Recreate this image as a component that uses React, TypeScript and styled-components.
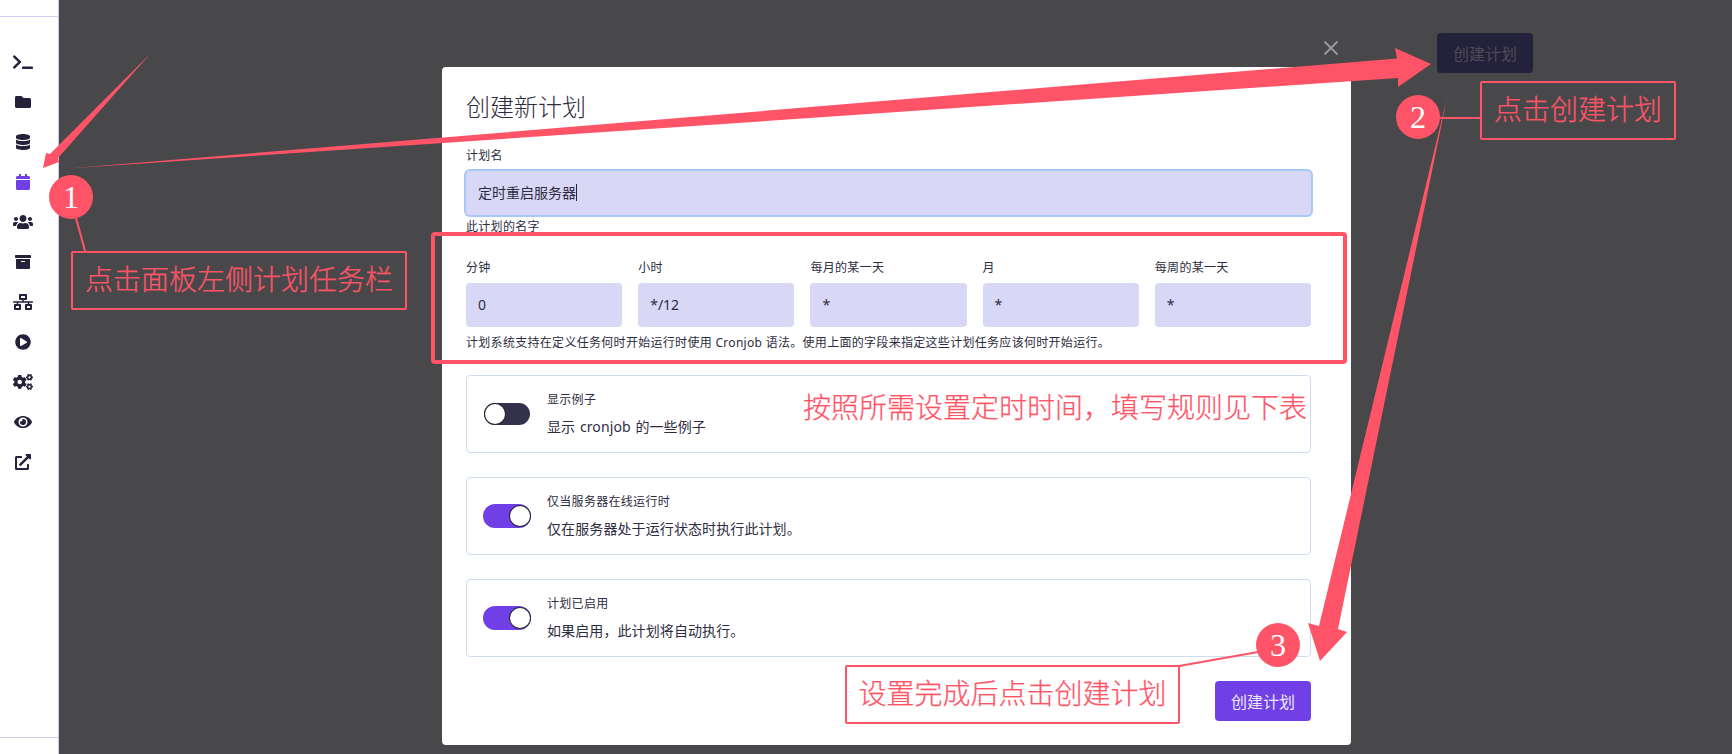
import React from "react";
import styled, { createGlobalStyle } from "styled-components";
import {
  FaTerminal, FaFolder, FaDatabase, FaCalendar, FaUsers, FaArchive,
  FaNetworkWired, FaPlayCircle, FaCogs, FaEye, FaExternalLinkAlt,
} from "react-icons/fa";

const RED = "#ff5468";
const PURPLE = "#7040e6";
const INK = "#24223a";
const SOFT = "#2e2c40";
const FONT = `"Noto Sans", "Noto Sans CJK SC", sans-serif`;

const Global = createGlobalStyle`
  html, body { margin: 0; padding: 0; width: 1732px; height: 754px; overflow: hidden; background: #48484a; }
  * { box-sizing: border-box; }
  body { font-family: ${FONT}; color: ${SOFT}; }
`;

const Page = styled.div`
  position: relative;
  display: flex;
  width: 1732px;
  height: 754px;
  overflow: hidden;
`;

const Sidebar = styled.aside`
  width: 59px;
  flex: none;
  height: 100%;
  padding: 16px 0;
  background: #fff;
  border-right: 1px solid #c9c8f0;
  display: flex;
  flex-direction: column;
`;

const Rule = styled.div`
  height: 1px;
  flex: none;
  background: #cfcef2;
`;

const NavList = styled.nav`
  flex: 1;
  padding-top: 25px;
  display: flex;
  flex-direction: column;
`;

const NavItem = styled.div<{ $active?: boolean }>`
  width: 46px;
  height: 40px;
  display: flex;
  align-items: center;
  justify-content: center;
  color: ${(p) => (p.$active ? PURPLE : INK)};
  svg {
    flex: none;
    width: 20px;
    height: 16px;
  }
`;

const Main = styled.main`
  flex: 1;
  display: flex;
  align-items: flex-start;
  padding-left: 383px;
  background: #48484a;
`;

const ModalWrap = styled.div`
  position: relative;
  width: 909px;
  margin-top: 67px;
  flex: none;
`;

const CloseBtn = styled.div`
  position: absolute;
  top: -28px;
  right: 12px;
  width: 16px;
  height: 16px;
  color: #9b9b9d;
`;

const Modal = styled.section`
  background: #fff;
  border-radius: 4px;
  padding: 24px 40px 24px 24px;
`;

const Title = styled.h2`
  margin: 0 0 24px;
  font-size: 24px;
  line-height: 32px;
  font-weight: 300;
`;

const Label = styled.div`
  font-size: 12px;
  line-height: 16px;
  letter-spacing: 0.3px;
  padding-top: 1px;
  margin-bottom: 7px;
`;

const Field = styled.div<{ $focus?: boolean }>`
  height: 44px;
  background: #d9d7f6;
  border-radius: 4px;
  padding: 0 12px 2px;
  display: flex;
  align-items: center;
  font-size: 14px;
  box-shadow: ${(p) => (p.$focus ? "0 0 0 2px #a8c8f5" : "none")};
`;

const Caret = styled.span`
  width: 1px;
  height: 17px;
  background: ${INK};
`;

const Hint = styled.div`
  font-size: 12px;
  line-height: 16px;
  letter-spacing: 0.3px;
  margin-top: 4px;
`;

const CronGrid = styled.div`
  display: grid;
  grid-template-columns: repeat(5, 1fr);
  gap: 16px;
  margin-top: 24px;
`;

const Footnote = styled.p`
  margin: 8px 0 24px;
  font-size: 12px;
  line-height: 16px;
  letter-spacing: 0.3px;
`;

const Card = styled.div`
  height: 78px;
  margin-bottom: 24px;
  border: 1px solid #cfdcec;
  border-radius: 4px;
  padding: 0 16px;
  display: flex;
  align-items: center;
  gap: 16px;
`;

const ToggleSlot = styled.div`
  width: 48px;
  flex: none;
  display: flex;
  justify-content: center;
`;

const Toggle = styled.div<{ $on?: boolean }>`
  position: relative;
  width: ${(p) => (p.$on ? 48 : 46)}px;
  height: ${(p) => (p.$on ? 24 : 22)}px;
  border-radius: 12px;
  background: ${(p) => (p.$on ? PURPLE : "#34324a")};
`;

const Knob = styled.span<{ $on?: boolean }>`
  position: absolute;
  top: ${(p) => (p.$on ? 2 : 1)}px;
  ${(p) => (p.$on ? "right: 1px;" : "left: 1px;")}
  width: 20px;
  height: 20px;
  border-radius: 50%;
  background: #fff;
  box-shadow: 0 0 0 1px #2a2838;
`;

const CardText = styled.div`
  display: flex;
  flex-direction: column;
  gap: 9px;
`;

const CardLabel = styled.div`
  font-size: 12px;
  line-height: 16px;
  letter-spacing: 0.3px;
`;

const CardDesc = styled.div`
  font-size: 14px;
  line-height: 20px;
  letter-spacing: 0.1px;
  word-spacing: 1px;
`;

const Footer = styled.div`
  display: flex;
  justify-content: flex-end;
`;

const Button = styled.div<{ $dim?: boolean }>`
  width: 96px;
  height: 40px;
  flex: none;
  border-radius: 4px;
  display: flex;
  align-items: center;
  justify-content: center;
  font-size: 16px;
  background: ${(p) => (p.$dim ? INK : PURPLE)};
  color: ${(p) => (p.$dim ? "#4c4a58" : "#ebe6fb")};
`;

const PageButton = styled(Button)`
  margin: 33px 0 0 86px;
`;

const Overlay = styled.svg`
  position: absolute;
  inset: 0;
  pointer-events: none;
`;

const Note = styled.div<{ $x: number; $y: number; $w: number }>`
  position: absolute;
  left: ${(p) => p.$x}px;
  top: ${(p) => p.$y}px;
  width: ${(p) => p.$w}px;
  height: 59px;
  padding-bottom: 5px;
  border: 2px solid ${RED};
  border-radius: 2px;
  display: flex;
  align-items: center;
  justify-content: center;
  color: ${RED};
  font-size: 28px;
  font-weight: 300;
  -webkit-text-stroke: 0.25px ${RED};
  white-space: nowrap;
`;

const FreeNote = styled.div`
  position: absolute;
  left: 803px;
  top: 387px;
  height: 40px;
  line-height: 40px;
  color: ${RED};
  font-size: 28px;
  font-weight: 300;
  -webkit-text-stroke: 0.25px ${RED};
  white-space: nowrap;
`;

const Badge = styled.div<{ $x: number; $y: number }>`
  position: absolute;
  left: ${(p) => p.$x - 22}px;
  top: ${(p) => p.$y - 22}px;
  width: 44px;
  height: 44px;
  border-radius: 50%;
  background: ${RED};
  color: #fff;
  display: flex;
  align-items: center;
  justify-content: center;
  font: 32px "Liberation Serif", serif;
`;

const navIcons = [
  FaTerminal, FaFolder, FaDatabase, FaCalendar, FaUsers, FaArchive,
  FaNetworkWired, FaPlayCircle, FaCogs, FaEye, FaExternalLinkAlt,
];

const cron = [
  ["分钟", "0"], ["小时", "*/12"], ["每月的某一天", "*"], ["月", "*"], ["每周的某一天", "*"],
];

const toggles = [
  { on: false, label: "显示例子", desc: "显示 cronjob 的一些例子" },
  { on: true, label: "仅当服务器在线运行时", desc: "仅在服务器处于运行状态时执行此计划。" },
  { on: true, label: "计划已启用", desc: "如果启用，此计划将自动执行。" },
];

export default function App() {
  return (
    <Page>
      <Global />
      <Sidebar>
        <Rule />
        <NavList>
          {navIcons.map((Icon, i) => (
            <NavItem key={i} $active={i === 3}><Icon /></NavItem>
          ))}
        </NavList>
        <Rule />
      </Sidebar>
      <Main>
        <ModalWrap>
          <CloseBtn>
            <svg width="16" height="16" viewBox="0 0 16 16" fill="none" stroke="currentColor" strokeWidth="1.8">
              <path d="M1.5 1.5 14.5 14.5M14.5 1.5 1.5 14.5" />
            </svg>
          </CloseBtn>
          <Modal>
            <Title>创建新计划</Title>
            <Label>计划名</Label>
            <Field $focus>定时重启服务器<Caret /></Field>
            <Hint>此计划的名字</Hint>
            <CronGrid>
              {cron.map(([label, value]) => (
                <div key={label}>
                  <Label>{label}</Label>
                  <Field>{value}</Field>
                </div>
              ))}
            </CronGrid>
            <Footnote>计划系统支持在定义任务何时开始运行时使用 Cronjob 语法。使用上面的字段来指定这些计划任务应该何时开始运行。</Footnote>
            {toggles.map((t) => (
              <Card key={t.label}>
                <ToggleSlot>
                  <Toggle $on={t.on}><Knob $on={t.on} /></Toggle>
                </ToggleSlot>
                <CardText>
                  <CardLabel>{t.label}</CardLabel>
                  <CardDesc>{t.desc}</CardDesc>
                </CardText>
              </Card>
            ))}
            <Footer><Button>创建计划</Button></Footer>
          </Modal>
        </ModalWrap>
        <PageButton $dim>创建计划</PageButton>
      </Main>

      <Overlay width="1732" height="754" viewBox="0 0 1732 754">
        <g fill={RED}>
          <polygon points="151,53 50,154 46,153 43,168 59,162 58,158" />
          <polygon points="68,168.5 1397,58.5 1395,48 1431,64 1398,87 1398,78" />
          <polygon points="1447,98 1338,629 1347,632 1320,661 1308,623 1319,626" />
        </g>
        <g stroke={RED} strokeWidth="2" fill="none">
          <path d="M76 218 85 251" />
          <path d="M1438 118H1480" />
          <path d="M1179 666 1258 652" />
          <rect x="433" y="234" width="912" height="128" rx="2" strokeWidth="4" />
        </g>
      </Overlay>

      <Badge $x={71} $y={197}>1</Badge>
      <Badge $x={1418} $y={117}>2</Badge>
      <Badge $x={1278} $y={645}>3</Badge>
      <Note $x={71} $y={251} $w={336}>点击面板左侧计划任务栏</Note>
      <Note $x={1480} $y={81} $w={196}>点击创建计划</Note>
      <Note $x={845} $y={665} $w={335}>设置完成后点击创建计划</Note>
      <FreeNote>按照所需设置定时时间，填写规则见下表</FreeNote>
    </Page>
  );
}
